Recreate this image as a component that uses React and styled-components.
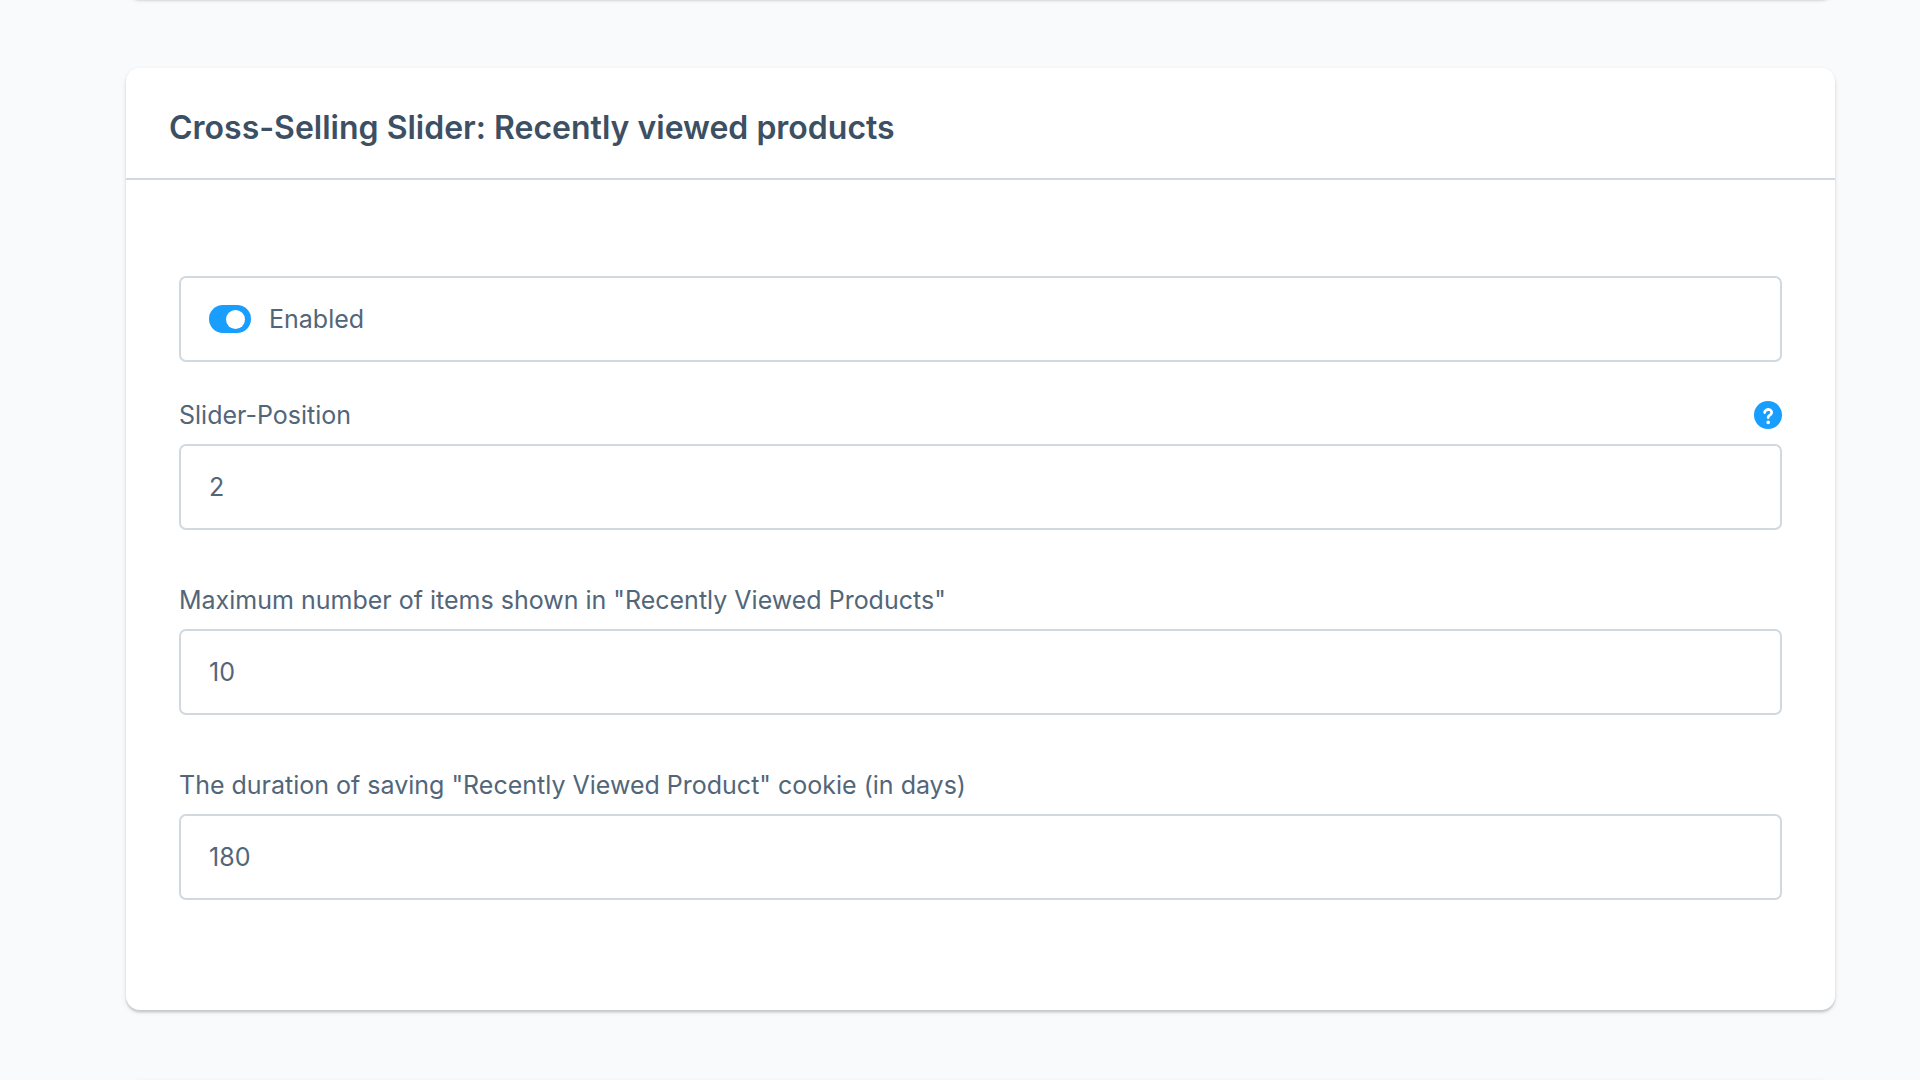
import React, { useState } from 'react'
import styled, { createGlobalStyle } from 'styled-components'

const App = () => {

  const [enabled, setEnabled] = useState(true);
  const [values, setValues] = useState({ position: '2', maxItems: '10', duration: '180' });

  const fields = [
    { name: 'position', label: 'Slider-Position', help: true },
    { name: 'maxItems', label: 'Maximum number of items shown in "Recently Viewed Products"' },
    { name: 'duration', label: 'The duration of saving "Recently Viewed Product" cookie (in days)' }
  ];

  const handleChange = (e) => {
    setValues({ ...values, [e.target.name]: e.target.value });
  }

  return (
    <>
      <GlobalStyle />
      <Page>
        <EdgeCard />

        <Card>
          <CardHeader>
            <CardTitle>Cross-Selling Slider: Recently viewed products</CardTitle>
          </CardHeader>

          <CardBody>
            <SwitchField htmlFor="enabled">
              <Switch
                id="enabled"
                type="checkbox"
                checked={enabled}
                onChange={(e) => setEnabled(e.target.checked)}
              />
              Enabled
            </SwitchField>

            <FieldList>
              {
                fields.map((field) => (
                  <Field key={field.name}>
                    <FieldHead>
                      <label htmlFor={field.name}>{field.label}</label>
                      {field.help && (
                        <HelpButton type="button" aria-label="Help">
                          <HelpIcon />
                        </HelpButton>
                      )}
                    </FieldHead>
                    <TextInput
                      id={field.name}
                      name={field.name}
                      type="text"
                      value={values[field.name]}
                      onChange={handleChange}
                    />
                  </Field>
                ))
              }
            </FieldList>
          </CardBody>
        </Card>

        <EdgeCard />
      </Page>
    </>
  )
}

const HelpIcon = () => (
  <svg width="28" height="28" viewBox="0 0 28 28" fill="none" aria-hidden="true">
    <path
      d="M10.7 11.5a3.5 3 0 1 1 5.6 2.4c-1.3.8-2.1 1.1-2.1 2.6"
      stroke="#fff"
      strokeWidth="2.8"
      strokeLinecap="round"
      strokeLinejoin="round"
    />
    <circle cx="14.2" cy="21.4" r="1.8" fill="#fff" />
  </svg>
)

const GlobalStyle = createGlobalStyle`
  * {
    box-sizing: border-box;
  }

  body {
    margin: 0;
    background: #f9fafc;
    color: #52667a;
    font-family: Inter, "Liberation Sans", sans-serif;
    font-size: 25px;
    line-height: 28px;
  }
`

const Page = styled.main`
  display: flex;
  flex-direction: column;
  gap: 70px;
  height: 100vh;
  padding: 0 85px 0 126px;
  overflow: hidden;
`

const Card = styled.section`
  flex-shrink: 0;
  background: #fff;
  border-radius: 14px;
  box-shadow: 0 2px 2px rgba(0, 0, 0, 0.08), 0 3px 2px rgba(0, 0, 0, 0.06), 0 2px 5px rgba(0, 0, 0, 0.1);
`

/* neighbouring cards that are scrolled out of view */
const EdgeCard = styled(Card)`
  height: 40px;

  &:first-child{
    margin-top: -42px;
  }
`

const CardHeader = styled.header`
  padding: 42px 43px 32px;
  border-bottom: 2px solid #d1d9e0;
`

const CardTitle = styled.h2`
  margin: 0;
  color: #3d5063;
  font-size: 32px;
  font-weight: 600;
  line-height: 36px;
`

const CardBody = styled.div`
  padding: 96px 53px 110px;
`

const SwitchField = styled.label`
  display: flex;
  align-items: center;
  gap: 18px;
  height: 86px;
  padding: 0 28px;
  border: 2px solid #d1d9e0;
  border-radius: 7px;
  cursor: pointer;
`

const Switch = styled.input`
  appearance: none;
  display: flex;
  align-items: center;
  width: 42px;
  height: 28px;
  margin: 0;
  padding: 0 6px;
  border-radius: 14px;
  background: ${({ checked }) => checked ? '#189eff' : '#c2ccd6'};
  justify-content: ${({ checked }) => checked ? 'flex-end' : 'flex-start'};
  cursor: pointer;

  &::before{
    content: '';
    width: 19px;
    height: 19px;
    border-radius: 50%;
    background: #fff;
  }
`

const FieldList = styled.div`
  display: flex;
  flex-direction: column;
  gap: 56px;
  margin-top: 39px;
`

const Field = styled.div`
  display: flex;
  flex-direction: column;
  gap: 15px;
`

const FieldHead = styled.div`
  display: flex;
  align-items: center;
  justify-content: space-between;
`

const HelpButton = styled.button`
  display: flex;
  width: 28px;
  height: 28px;
  padding: 0;
  border: 0;
  border-radius: 50%;
  background: #189eff;
  cursor: pointer;
`

const TextInput = styled.input`
  width: 100%;
  height: 86px;
  padding: 0 28px;
  border: 2px solid #d1d9e0;
  border-radius: 7px;
  outline: 0;
  background: #fff;
  color: inherit;
  font: inherit;
`

export default App
